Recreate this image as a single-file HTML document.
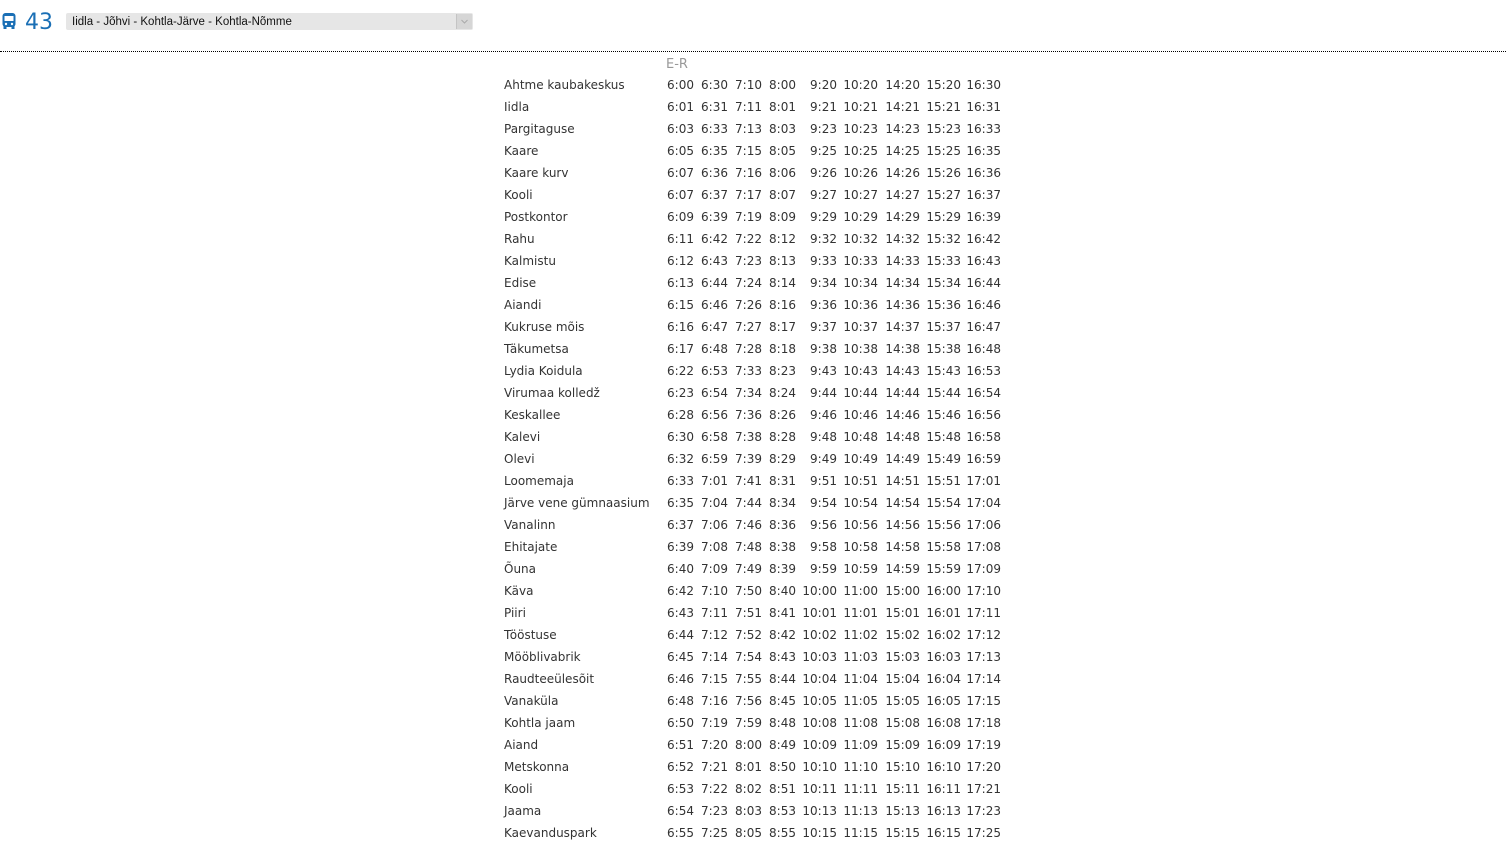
<!DOCTYPE html>
<html><head><meta charset="utf-8"><style>
body{margin:0;background:#fff;width:1506px;height:850px;overflow:hidden;position:relative;font-family:"DejaVu Sans","Liberation Sans",sans-serif;}
#num{position:absolute;left:25px;top:10px;font-size:22px;color:#1a6fb5;font-family:"DejaVu Sans",sans-serif;}
#sel{position:absolute;left:66px;top:13px;width:407px;height:17px;background:#e6e6e6;border-radius:2px;font-family:"Liberation Sans",sans-serif;font-size:11.5px;color:#111;line-height:19px;}
#sel span{margin-left:6px}
#arr{position:absolute;right:1px;top:1px;width:15px;height:15px;background:#d6d6d6;border-left:1px solid #c4c4c4;}
#line{position:absolute;left:0;top:51px;width:1506px;border-top:1px dotted #000;}
table{position:absolute;left:504px;top:54px;border-collapse:collapse;table-layout:fixed;font-size:12px;color:#333;}
td{padding:0;height:22px;text-align:right;white-space:nowrap;}
td:first-child{text-align:left}
.h td{color:#999;font-size:13px;height:20px;text-align:left}
</style></head><body>
<svg style="position:absolute;left:2px;top:13px" width="14" height="17" viewBox="0 0 14 17"><rect x="0.5" y="0" width="13" height="14" rx="3" fill="#1a6fb5"/><rect x="2.5" y="3" width="9" height="5" fill="#fff"/><circle cx="4" cy="11" r="1.2" fill="#fff"/><circle cx="10" cy="11" r="1.2" fill="#fff"/><rect x="1.5" y="13" width="3" height="3" fill="#1a6fb5"/><rect x="9.5" y="13" width="3" height="3" fill="#1a6fb5"/></svg>
<div id="num">43</div>
<div id="sel"><span>Iidla - Jõhvi - Kohtla-Järve - Kohtla-Nõmme</span><div id="arr"><svg width="15" height="15" viewBox="0 0 15 15"><path d="M4.5 6 L7.5 9 L10.5 6" fill="none" stroke="#aaa" stroke-width="1"/></svg></div></div>
<div id="line"></div>
<table>
<colgroup><col style="width:156px"><col style="width:34px"><col style="width:34px"><col style="width:34px"><col style="width:34px"><col style="width:41px"><col style="width:41px"><col style="width:42px"><col style="width:41px"><col style="width:40px"></colgroup>
<tr class="h"><td></td><td colspan="9" style="padding-left:6px">E-R</td></tr>
<tr><td>Ahtme kaubakeskus</td><td>6:00</td><td>6:30</td><td>7:10</td><td>8:00</td><td>9:20</td><td>10:20</td><td>14:20</td><td>15:20</td><td>16:30</td></tr>
<tr><td>Iidla</td><td>6:01</td><td>6:31</td><td>7:11</td><td>8:01</td><td>9:21</td><td>10:21</td><td>14:21</td><td>15:21</td><td>16:31</td></tr>
<tr><td>Pargitaguse</td><td>6:03</td><td>6:33</td><td>7:13</td><td>8:03</td><td>9:23</td><td>10:23</td><td>14:23</td><td>15:23</td><td>16:33</td></tr>
<tr><td>Kaare</td><td>6:05</td><td>6:35</td><td>7:15</td><td>8:05</td><td>9:25</td><td>10:25</td><td>14:25</td><td>15:25</td><td>16:35</td></tr>
<tr><td>Kaare kurv</td><td>6:07</td><td>6:36</td><td>7:16</td><td>8:06</td><td>9:26</td><td>10:26</td><td>14:26</td><td>15:26</td><td>16:36</td></tr>
<tr><td>Kooli</td><td>6:07</td><td>6:37</td><td>7:17</td><td>8:07</td><td>9:27</td><td>10:27</td><td>14:27</td><td>15:27</td><td>16:37</td></tr>
<tr><td>Postkontor</td><td>6:09</td><td>6:39</td><td>7:19</td><td>8:09</td><td>9:29</td><td>10:29</td><td>14:29</td><td>15:29</td><td>16:39</td></tr>
<tr><td>Rahu</td><td>6:11</td><td>6:42</td><td>7:22</td><td>8:12</td><td>9:32</td><td>10:32</td><td>14:32</td><td>15:32</td><td>16:42</td></tr>
<tr><td>Kalmistu</td><td>6:12</td><td>6:43</td><td>7:23</td><td>8:13</td><td>9:33</td><td>10:33</td><td>14:33</td><td>15:33</td><td>16:43</td></tr>
<tr><td>Edise</td><td>6:13</td><td>6:44</td><td>7:24</td><td>8:14</td><td>9:34</td><td>10:34</td><td>14:34</td><td>15:34</td><td>16:44</td></tr>
<tr><td>Aiandi</td><td>6:15</td><td>6:46</td><td>7:26</td><td>8:16</td><td>9:36</td><td>10:36</td><td>14:36</td><td>15:36</td><td>16:46</td></tr>
<tr><td>Kukruse mõis</td><td>6:16</td><td>6:47</td><td>7:27</td><td>8:17</td><td>9:37</td><td>10:37</td><td>14:37</td><td>15:37</td><td>16:47</td></tr>
<tr><td>Täkumetsa</td><td>6:17</td><td>6:48</td><td>7:28</td><td>8:18</td><td>9:38</td><td>10:38</td><td>14:38</td><td>15:38</td><td>16:48</td></tr>
<tr><td>Lydia Koidula</td><td>6:22</td><td>6:53</td><td>7:33</td><td>8:23</td><td>9:43</td><td>10:43</td><td>14:43</td><td>15:43</td><td>16:53</td></tr>
<tr><td>Virumaa kolledž</td><td>6:23</td><td>6:54</td><td>7:34</td><td>8:24</td><td>9:44</td><td>10:44</td><td>14:44</td><td>15:44</td><td>16:54</td></tr>
<tr><td>Keskallee</td><td>6:28</td><td>6:56</td><td>7:36</td><td>8:26</td><td>9:46</td><td>10:46</td><td>14:46</td><td>15:46</td><td>16:56</td></tr>
<tr><td>Kalevi</td><td>6:30</td><td>6:58</td><td>7:38</td><td>8:28</td><td>9:48</td><td>10:48</td><td>14:48</td><td>15:48</td><td>16:58</td></tr>
<tr><td>Olevi</td><td>6:32</td><td>6:59</td><td>7:39</td><td>8:29</td><td>9:49</td><td>10:49</td><td>14:49</td><td>15:49</td><td>16:59</td></tr>
<tr><td>Loomemaja</td><td>6:33</td><td>7:01</td><td>7:41</td><td>8:31</td><td>9:51</td><td>10:51</td><td>14:51</td><td>15:51</td><td>17:01</td></tr>
<tr><td>Järve vene gümnaasium</td><td>6:35</td><td>7:04</td><td>7:44</td><td>8:34</td><td>9:54</td><td>10:54</td><td>14:54</td><td>15:54</td><td>17:04</td></tr>
<tr><td>Vanalinn</td><td>6:37</td><td>7:06</td><td>7:46</td><td>8:36</td><td>9:56</td><td>10:56</td><td>14:56</td><td>15:56</td><td>17:06</td></tr>
<tr><td>Ehitajate</td><td>6:39</td><td>7:08</td><td>7:48</td><td>8:38</td><td>9:58</td><td>10:58</td><td>14:58</td><td>15:58</td><td>17:08</td></tr>
<tr><td>Õuna</td><td>6:40</td><td>7:09</td><td>7:49</td><td>8:39</td><td>9:59</td><td>10:59</td><td>14:59</td><td>15:59</td><td>17:09</td></tr>
<tr><td>Käva</td><td>6:42</td><td>7:10</td><td>7:50</td><td>8:40</td><td>10:00</td><td>11:00</td><td>15:00</td><td>16:00</td><td>17:10</td></tr>
<tr><td>Piiri</td><td>6:43</td><td>7:11</td><td>7:51</td><td>8:41</td><td>10:01</td><td>11:01</td><td>15:01</td><td>16:01</td><td>17:11</td></tr>
<tr><td>Tööstuse</td><td>6:44</td><td>7:12</td><td>7:52</td><td>8:42</td><td>10:02</td><td>11:02</td><td>15:02</td><td>16:02</td><td>17:12</td></tr>
<tr><td>Mööblivabrik</td><td>6:45</td><td>7:14</td><td>7:54</td><td>8:43</td><td>10:03</td><td>11:03</td><td>15:03</td><td>16:03</td><td>17:13</td></tr>
<tr><td>Raudteeülesõit</td><td>6:46</td><td>7:15</td><td>7:55</td><td>8:44</td><td>10:04</td><td>11:04</td><td>15:04</td><td>16:04</td><td>17:14</td></tr>
<tr><td>Vanaküla</td><td>6:48</td><td>7:16</td><td>7:56</td><td>8:45</td><td>10:05</td><td>11:05</td><td>15:05</td><td>16:05</td><td>17:15</td></tr>
<tr><td>Kohtla jaam</td><td>6:50</td><td>7:19</td><td>7:59</td><td>8:48</td><td>10:08</td><td>11:08</td><td>15:08</td><td>16:08</td><td>17:18</td></tr>
<tr><td>Aiand</td><td>6:51</td><td>7:20</td><td>8:00</td><td>8:49</td><td>10:09</td><td>11:09</td><td>15:09</td><td>16:09</td><td>17:19</td></tr>
<tr><td>Metskonna</td><td>6:52</td><td>7:21</td><td>8:01</td><td>8:50</td><td>10:10</td><td>11:10</td><td>15:10</td><td>16:10</td><td>17:20</td></tr>
<tr><td>Kooli</td><td>6:53</td><td>7:22</td><td>8:02</td><td>8:51</td><td>10:11</td><td>11:11</td><td>15:11</td><td>16:11</td><td>17:21</td></tr>
<tr><td>Jaama</td><td>6:54</td><td>7:23</td><td>8:03</td><td>8:53</td><td>10:13</td><td>11:13</td><td>15:13</td><td>16:13</td><td>17:23</td></tr>
<tr><td>Kaevanduspark</td><td>6:55</td><td>7:25</td><td>8:05</td><td>8:55</td><td>10:15</td><td>11:15</td><td>15:15</td><td>16:15</td><td>17:25</td></tr>
</table>
</body></html>
